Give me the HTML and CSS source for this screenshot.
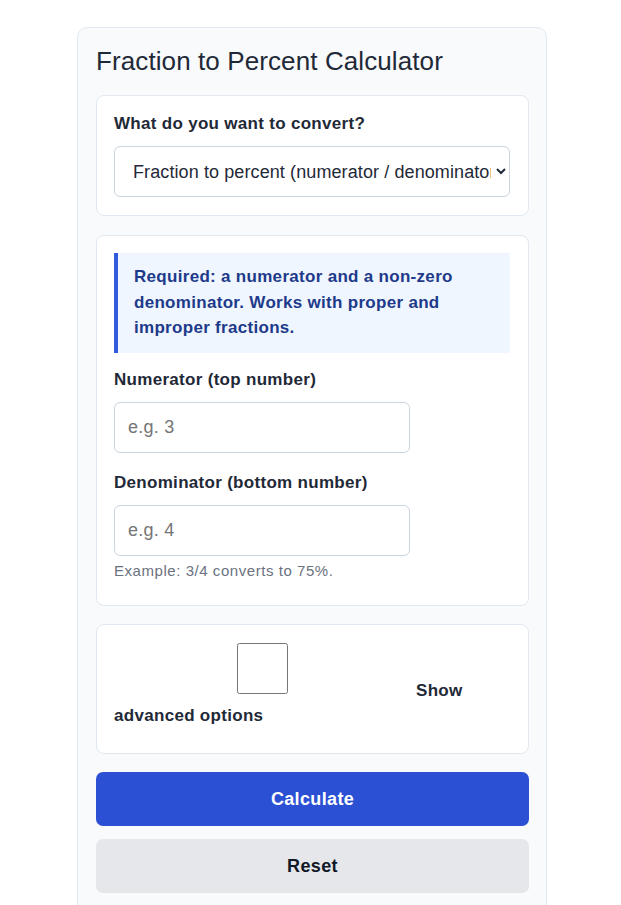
FILE: index.html
```html
<!DOCTYPE html>
<html lang="en">
<head>
<meta charset="utf-8">
<title>Fraction to Percent Calculator</title>
<link rel="stylesheet" href="styles.css">
</head>
<body>
<div class="calc">
  <h1 class="title">Fraction to Percent Calculator</h1>

  <section class="card card-mode">
    <label class="label" for="mode">What do you want to convert?</label>
    <select id="mode" class="control select">
      <option>Fraction to percent (numerator / denominator)</option>
    </select>
  </section>

  <section class="card">
    <div class="note">Required: a numerator and a non-zero denominator. Works with proper and improper fractions.</div>
    <div class="field">
      <label class="label" for="num">Numerator (top number)</label>
      <input id="num" class="control input" type="text" placeholder="e.g. 3">
    </div>
    <div class="field last">
      <label class="label" for="den">Denominator (bottom number)</label>
      <input id="den" class="control input" type="text" placeholder="e.g. 4">
    </div>
    <p class="hint">Example: 3/4 converts to 75%.</p>
  </section>

  <section class="card adv">
    <label class="check-label"><input class="check" type="checkbox"><span class="show">Show</span> advanced options</label>
  </section>

  <div class="actions">
    <button class="btn primary" type="button">Calculate</button>
    <button class="btn secondary" type="button">Reset</button>
  </div>
</div>
</body>
</html>
```
FILE: styles.css
```css
* { box-sizing: border-box; }

body {
  margin: 0;
  padding: 27px 0 0 3px;
  background: #ffffff;
  font-family: "Liberation Sans", Arial, sans-serif;
  color: #1f2937;
}

.calc {
  width: 470px;
  margin: 0 auto;
  background: #f8fafc;
  border: 1px solid #e2e8f0;
  border-radius: 10px;
  padding: 18px 17px 30px 18px;
  display: flex;
  flex-direction: column;
}

.title {
  margin: 0 0 19px;
  font-size: 26px;
  font-weight: 400;
  line-height: 30px;
  letter-spacing: 0.1px;
  color: #1f2937;
}

.card {
  background: #ffffff;
  border: 1px solid #e2e8f0;
  border-radius: 8px;
  padding: 18px 18px 18px 17px;
  margin-bottom: 18px;
}

.card-mode { margin-bottom: 19px; }

.label {
  display: block;
  font-size: 17px;
  font-weight: 700;
  letter-spacing: 0.3px;
  line-height: 20px;
  color: #1f2937;
  margin-bottom: 12px;
}

.control {
  display: block;
  height: 51px;
  border: 1px solid #cbd5e1;
  border-radius: 6px;
  background: #ffffff;
  font-family: "Liberation Sans", Arial, sans-serif;
  font-size: 18px;
  letter-spacing: 0.25px;
  color: #1f2937;
  padding: 0 12px 0 13px;
}

.select {
  width: 100%;
  letter-spacing: 0.1px;
  padding: 0 2px 0 14px;
}

.input { width: 296px; }
.input::placeholder { color: #757575; }

.note {
  background: #eff6ff;
  border-left: 4px solid #2f5bdc;
  padding: 11px 16px 12.5px;
  font-size: 17px;
  font-weight: 700;
  letter-spacing: 0.3px;
  line-height: 25.5px;
  color: #1e3a8a;
  margin: -1px 0 17px;
}

.field { margin-bottom: 20px; }
.field.last { margin-bottom: 0; }

.hint {
  margin: 6px 0 8px;
  font-size: 15px;
  letter-spacing: 0.55px;
  line-height: 17px;
  color: #6b7280;
}

.adv { padding-bottom: 25px; }

.check-label {
  display: block;
  font-size: 17px;
  font-weight: 700;
  letter-spacing: 0.3px;
  line-height: 25px;
  color: #1f2937;
}

.check {
  width: 51px;
  height: 51px;
  margin: 0 3px 4px 123px;
  vertical-align: 2px;
}

.show { margin-left: 125px; }

.actions {
  display: flex;
  flex-direction: column;
  gap: 13px;
}

.btn {
  height: 54px;
  border: none;
  border-radius: 7px;
  font-family: "Liberation Sans", Arial, sans-serif;
  font-size: 18px;
  font-weight: 700;
  letter-spacing: 0.35px;
  cursor: pointer;
}

.primary { background: #2b50d4; color: #ffffff; }
.secondary { background: #e5e7eb; color: #111827; }
```
